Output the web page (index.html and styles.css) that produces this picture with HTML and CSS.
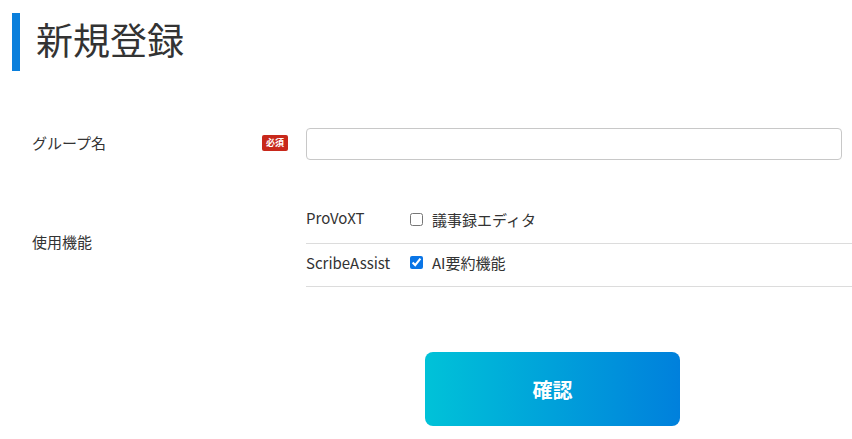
FILE: index.html
```html
<!DOCTYPE html>
<html lang="ja">
<head>
<meta charset="utf-8">
<title>新規登録</title>
<link rel="stylesheet" href="styles.css">
</head>
<body>
<div class="page">
  <h1 class="title">新規登録</h1>
  <form class="form">
    <div class="row row-name">
      <div class="label">グループ名</div>
      <div class="badge-cell"><span class="badge">必須</span></div>
      <div class="field"><input class="text-input" type="text"></div>
    </div>
    <div class="row row-features">
      <div class="label">使用機能</div>
      <div class="badge-cell"></div>
      <div class="features">
        <div class="feature">
          <span class="product">ProVoXT</span>
          <label class="check"><input type="checkbox"><span>議事録エディタ</span></label>
        </div>
        <div class="feature">
          <span class="product">ScribeAssist</span>
          <label class="check"><input type="checkbox" checked><span>AI要約機能</span></label>
        </div>
      </div>
    </div>
    <div class="actions">
      <button type="button" class="confirm">確認</button>
    </div>
  </form>
</div>
</body>
</html>
```

FILE: styles.css
```css
* { box-sizing: border-box; }
html, body {
  margin: 0;
  padding: 0;
  background: #fff;
}
body {
  font-family: "Noto Sans CJK JP", "Noto Sans", sans-serif;
  color: #333;
  font-size: 15px;
}
.page {
  padding: 13px 0 0 12px;
}
.title {
  margin: 0;
  border-left: 8px solid #0a7fdc;
  padding-left: 16px;
  height: 58px;
  line-height: 52px;
  font-size: 37px;
  font-weight: 400;
  color: #333;
}
.form {
  padding-left: 20px;
  margin-top: 57px;
}
.row {
  display: grid;
  grid-template-columns: 230px 44px 1fr;
  align-items: center;
}
.label {
  font-size: 15px;
  color: #333;
  padding-bottom: 4px;
}
.badge {
  display: inline-block;
  width: 26px;
  height: 16px;
  line-height: 16px;
  background: #c8281b;
  color: #fff;
  font-size: 9px;
  font-weight: 700;
  text-align: center;
  border-radius: 2px;
}
.badge-cell {
  display: flex;
  align-items: center;
  padding-bottom: 2px;
}
.field {
  padding-right: 10px;
}
.text-input {
  display: block;
  width: 100%;
  height: 32px;
  border: 1px solid #c8c8c8;
  border-radius: 4px;
  background: #fff;
  font: inherit;
  padding: 0 8px;
}
.row-features {
  margin-top: 40px;
}
.feature {
  display: flex;
  align-items: center;
  height: 44px;
  padding-bottom: 5px;
  border-bottom: 1px solid #dcdcdc;
}
.feature + .feature {
  height: 43px;
}
.product {
  width: 104px;
  font-size: 15px;
  color: #333;
}
.feature:first-child .product {
  margin-top: -4px;
}
.check {
  display: flex;
  align-items: center;
  gap: 9px;
  font-size: 15px;
  color: #333;
}
.check input {
  margin: 0;
  width: 13px;
  height: 13px;
  accent-color: #0a75e6;
}
.actions {
  display: flex;
  margin-top: 65px;
  padding-left: 393px;
}
.confirm {
  width: 255px;
  height: 74px;
  border: 0;
  border-radius: 8px;
  background: linear-gradient(to right, #00c2d8, #0080dc);
  color: #fff;
  font-family: "Noto Sans CJK JP", sans-serif;
  font-size: 20px;
  font-weight: 700;
  cursor: pointer;
}
```
